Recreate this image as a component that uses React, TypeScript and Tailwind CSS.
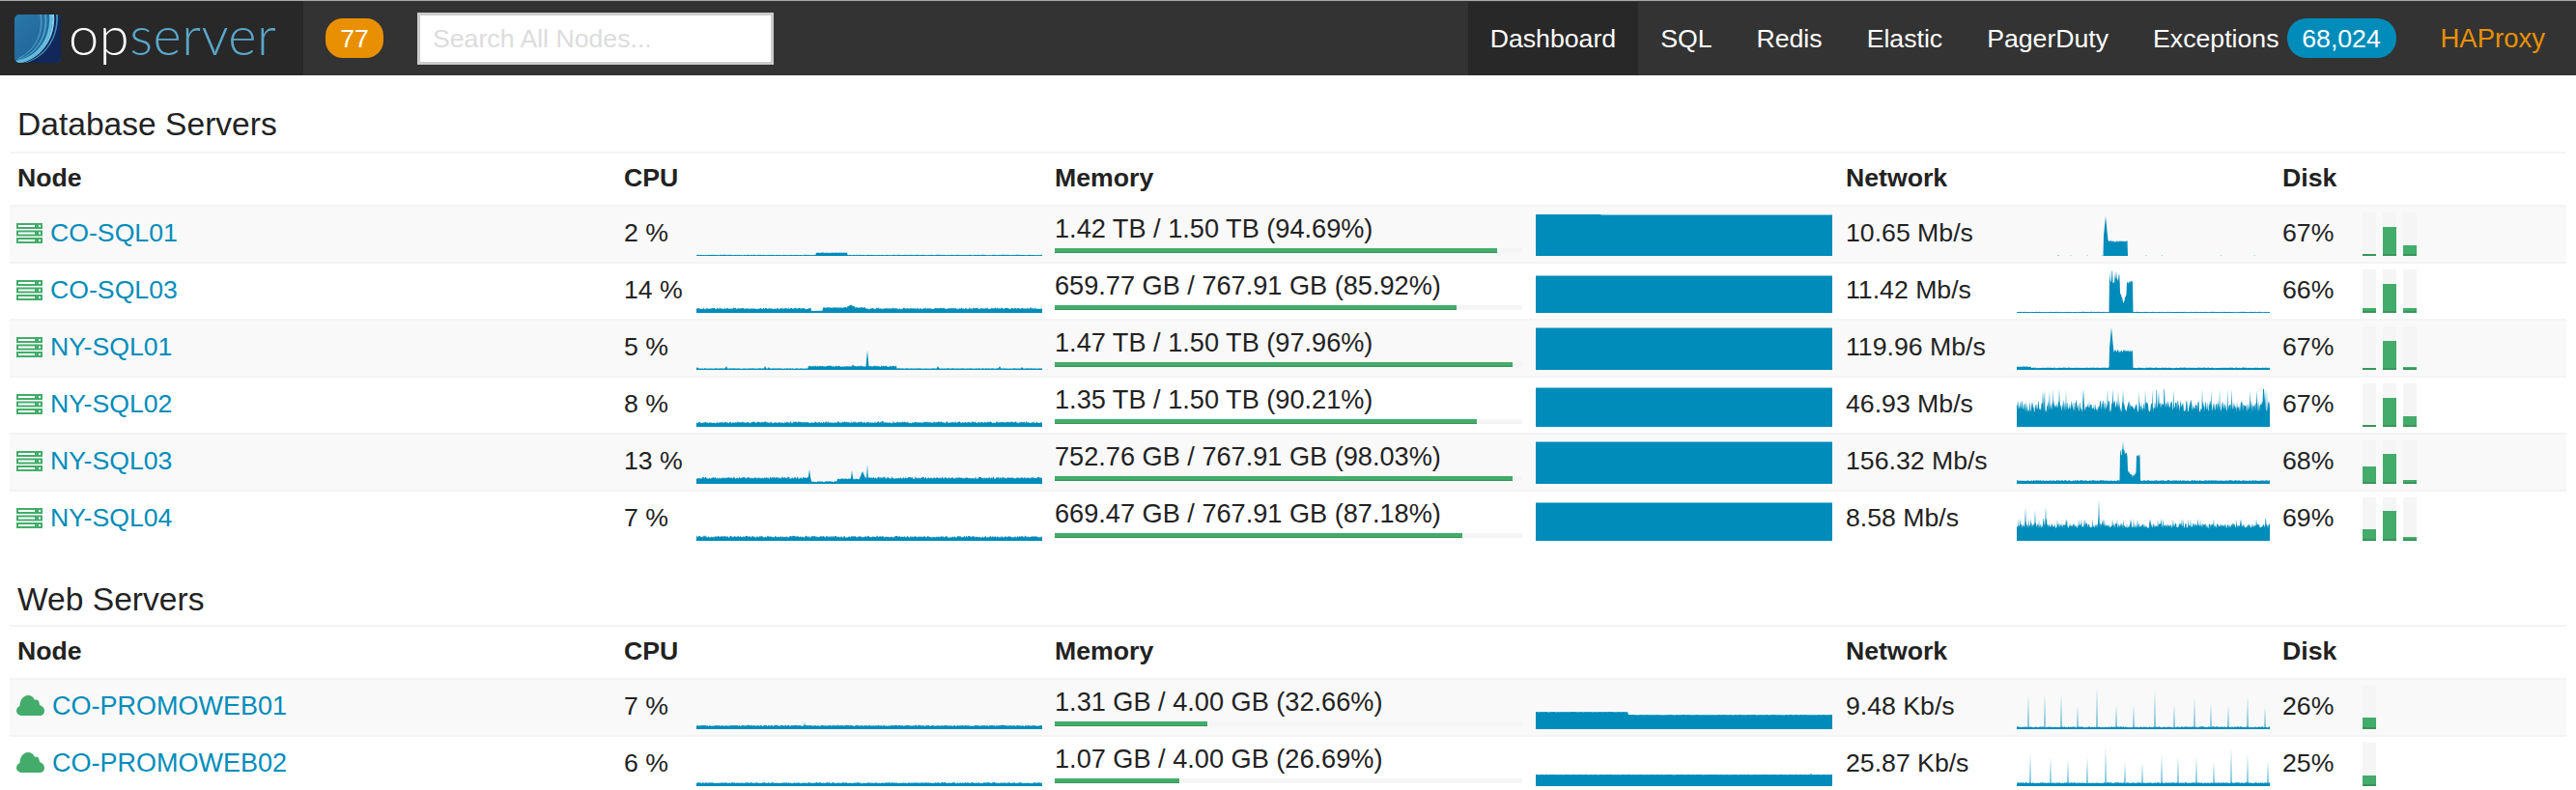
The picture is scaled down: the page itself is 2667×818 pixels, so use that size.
import React from "react";

function rng(seed: number) {
  let a = seed;
  return () => {
    a |= 0;
    a = (a + 0x6d2b79f5) | 0;
    let t = Math.imul(a ^ (a >>> 15), 1 | a);
    t = (t + Math.imul(t ^ (t >>> 7), 61 | t)) ^ t;
    return ((t ^ (t >>> 14)) >>> 0) / 4294967296;
  };
}

type Fn = (x: number, r: number) => number;

function Spark({ w, h, fn, seed }: { w: number; h: number; fn: Fn; seed: number }) {
  const r = rng(seed);
  let d = `M0 ${h}`;
  for (let x = 0; x <= w; x += 0.5) {
    const v = Math.max(0, Math.min(h, fn(x, r())));
    d += ` L${x} ${(h - v).toFixed(2)}`;
  }
  d += ` L${w} ${h} Z`;
  return (
    <svg width={w} height={h} viewBox={`0 0 ${w} ${h}`} className="block shrink-0 self-end mb-[6px]">
      <path d={d} fill="#008cba" />
    </svg>
  );
}

const spike = (x: number, at: number, height: number, width = 1.2) =>
  Math.abs(x - at) < width ? height * (1 - Math.abs(x - at) / (width * 1.4)) : 0;

const spikes = (base: number, list: [number, number][]): Fn => (x, r) => {
  let v = base + r * 1.2;
  for (const [at, he] of list) v = Math.max(v, spike(x, at, he, 0.5));
  return v;
};

const cpu: Fn[] = [
  (x, r) => (x >= 124 && x <= 156 ? 3 + r * 0.6 : 0.8 + r * 0.5),
  (x, r) => {
    if (x >= 119 && x < 131) return 2 + r * 0.4;
    if (x >= 131 && x < 175) return 5 + r * 1.2 + spike(x, 160, 2.5, 4);
    return 3.6 + r * 2;
  },
  (x, r) => {
    let v = 1.2 + r * 0.6;
    if (x >= 116 && x <= 207) v = 3 + r * 1.5;
    for (const [a, b] of [[1, 3], [31, 4], [71, 4], [75, 3], [162, 6], [250, 4], [314, 4], [337, 3]] as const)
      v = Math.max(v, spike(x, a, b, 1.4));
    return Math.max(v, spike(x, 177, 20, 1.4));
  },
  (_x, r) => 3.6 + r * 2.2,
  (x, r) => {
    let v = 5 + r * 2.4;
    if (x >= 119 && x < 146) v = 1.8 + r * 1.2;
    if (x >= 146 && x < 175) v = 4.5 + r * 1.5;
    v = Math.max(v, spike(x, 117, 15, 1.5), spike(x, 161, 14, 1.3), spike(x, 172, 13, 4), spike(x, 177, 20, 1));
    return v;
  },
  (_x, r) => 3.2 + r * 2.2,
];

const webCpu: Fn[] = [
  (x, r) => Math.max(3 + r * 1.4, spike(x, 112, 7, 1)),
  (x, r) => Math.max(2.8 + r * 1.2, spike(x, 335, 5, 1)),
];

const net: Fn[] = [
  (x, r) => {
    if (x >= 90 && x <= 114.5) return Math.max(14 + r * 2, spike(x, 92, 41, 3));
    return r > 0.985 ? 0.8 : 0;
  },
  (x, r) => {
    if (x < 96 || x > 120) return 0.8 + r * 0.4;
    if (x < 107) return 30 + r * 14;
    if (x < 114) return 9 + Math.abs(x - 110.5) * 3 + r * 3;
    return 30 + r * 4;
  },
  (x, r) => {
    if (x >= 96 && x <= 120) return Math.max(18 + r * 3, spike(x, 98, 44, 3));
    return (x < 15 ? 3 : 1.8) + r * 0.7;
  },
  (_x, r) => {
    const q = r * r;
    return 15 + r * 14 + (q > 0.86 ? q * 11 : 0);
  },
  (x, r) => {
    if (x >= 107 && x < 128) {
      if (x < 115) return Math.max(28 + r * 8, spike(x, 110, 44, 2));
      if (x < 124) return 6 + Math.abs(x - 120) * 1.2 + r * 3;
      return 26 + r * 5;
    }
    return 2.8 + r * 1.2;
  },
  (x, r) => {
    let v = 13 + r * 6;
    for (const [a, b] of [[9, 35], [19, 32], [30, 36], [85, 43]] as const) v = Math.max(v, spike(x, a, b, 0.9));
    return v + (r > 0.93 ? 4 : 0);
  },
];

const webNet: Fn[] = [
  spikes(1.6, [[12, 35], [29, 37], [46, 36], [63, 24], [83, 43], [103, 25], [121, 25], [143, 40], [163, 26], [184, 32], [201, 27], [219, 24], [239, 34], [257, 23]]),
  spikes(2.8, [[14, 34], [35, 30], [53, 27], [73, 30], [92, 41], [112, 25], [130, 24], [150, 33], [167, 31], [186, 30], [204, 25], [222, 40], [239, 33], [260, 26]]),
];

function ServerIcon() {
  return (
    <svg width="27" height="21" viewBox="0 0 27 21" className="shrink-0">
      {[0, 7.5, 15].map((y) => (
        <g key={y}>
          <rect x="0" y={y} width="27" height="6" fill="#43ac6a" />
          <rect x="2" y={y + 2} width="17" height="2" fill="#ffffff" />
          <rect x="23" y={y + 2} width="2" height="2" fill="#ffffff" />
        </g>
      ))}
    </svg>
  );
}

function CloudIcon() {
  return (
    <svg width="29" height="21" viewBox="0 0 29 21" className="shrink-0 mb-[2px]">
      <path
        d="M6 21C2 21 0 18.5 0 16C0 13.5 1.5 12 3.5 11C3.5 5 7 0 12 0C16 0 18 2.5 19 5C20.5 4 23 4.5 23.5 7.5C23.8 8.5 24 9 24 10C27 11 29 13 29 16C29 19 27 21 24 21Z"
        fill="#43ac6a"
      />
    </svg>
  );
}

function Logo() {
  return (
    <div className="flex items-center w-[314px] h-full bg-[#282828] pl-[15px] shrink-0">
      <svg width="48" height="50" viewBox="0 0 48 50" className="shrink-0">
        <defs>
          <linearGradient id="lg" x1="0" y1="0" x2="1" y2="1">
            <stop offset="0" stopColor="#2a78ab" />
            <stop offset="1" stopColor="#1c5c8f" />
          </linearGradient>
          <clipPath id="cp">
            <rect width="48" height="50" rx="5" />
          </clipPath>
        </defs>
        <g clipPath="url(#cp)">
          <rect width="48" height="50" fill="url(#lg)" />
          <path d="M2 50C26 46 40 26 39 0H48V50Z" fill="#12275a" />
          <path d="M2 48C24 44 38 24 36 0H39C41 24 28 44 6 50H2Z" fill="#62bfe0" />
          <path d="M2 47C22 42 34 22 31 0H33C36 22 24 42 2 48Z" fill="#4aa0c8" />
          <path d="M4 45C20 38 30 20 26 0H28C31 20 22 38 4 46Z" fill="#4a97c0" />
          <path d="M39 0H41C43 22 30 44 8 50H6C28 44 41 24 39 0Z" fill="#8ad3ec" />
          <path d="M43 0H45C46 22 34 44 12 50H10C31 44 45 24 43 0Z" fill="#3f93bd" />
        </g>
      </svg>
      <div className="ml-[8px] font-['Lato',sans-serif] font-light text-[56px] leading-none tracking-[0.5px] mt-[-8px]">
        <span className="text-white">op</span>
        <span className="text-[#5aa7c9]">server</span>
      </div>
    </div>
  );
}

function Nav() {
  const items = ["SQL", "Redis", "Elastic", "PagerDuty"];
  return (
    <nav className="flex items-center h-[78px] bg-[#333333] border-t border-t-[#aaaaaa] text-[26.67px] text-white">
      <Logo />
      <span className="ml-[23px] flex items-center justify-center w-[60px] h-[41px] rounded-[18px] bg-[#e99002]">77</span>
      <div className="ml-[35px] flex items-center w-[369px] h-[54px] bg-white border-[3px] border-[#cccccc] pl-[13px] text-[#dcdcdc]">
        Search All Nodes...
      </div>
      <div className="ml-auto flex items-center h-full pr-[32px]">
        <a className="flex items-center h-[76px] px-[23px] bg-[#282828] mr-[23px]">Dashboard</a>
        {items.map((t) => (
          <a key={t} className="mr-[46px]">{t}</a>
        ))}
        <a>Exceptions</a>
        <span className="ml-[8px] flex items-center justify-center w-[113px] h-[41px] rounded-[20px] bg-[#008cba]">68,024</span>
        <a className="ml-[46px] text-[#e99002] text-[27.5px]">HAProxy</a>
      </div>
    </nav>
  );
}

const rowGrid = "grid grid-cols-[628px_446px_819px_452px_301px]";

function Header() {
  return (
    <div className={`${rowGrid} h-[55px] items-center font-bold border-t-2 border-t-[#f4f4f4] pb-[4px]`}>
      <div className="pl-[8px]">Node</div>
      <div className="pl-[8px]">CPU</div>
      <div className="pl-[8px]">Memory</div>
      <div className="pl-[8px]">Network</div>
      <div className="pl-[8px]">Disk</div>
    </div>
  );
}

type R = {
  name: string;
  cpu: string;
  cpuFn: Fn;
  mem: string;
  pct: number;
  memH: number;
  memFn: Fn;
  net: string;
  netFn: Fn;
  disk: string;
  bars: number[];
  cloud?: boolean;
};

function Bar({ v }: { v: number }) {
  return (
    <div className="relative w-[14px] h-[45px] bg-[#f5f5f5] flex flex-col justify-end">
      <div className="bg-[#43ac6a] border-b-2 border-b-[#3a945b]" style={{ height: v }} />
    </div>
  );
}

function memPath(h: number, fn: Fn) {
  const r = rng(5);
  let d = `M0 ${h}`;
  for (let x = 0; x <= 307; x += 1) d += ` L${x} ${(h - Math.min(h, fn(x, r()))).toFixed(2)}`;
  return d + ` L307 ${h} Z`;
}

function Row({ r, odd, index }: { r: R; odd: boolean; index: number }) {
  return (
    <div className={`${rowGrid} h-[59px] border-t-2 border-t-[#f4f4f4] ${odd ? "bg-[#f9f9f9]" : "bg-white"}`}>
      <div className="flex items-center pl-[7px] pb-[3px]">
        {r.cloud ? <CloudIcon /> : <ServerIcon />}
        <a className={`text-[#008cba] ${r.cloud ? "ml-[8px] text-[27px]" : "ml-[8px]"}`}>{r.name}</a>
      </div>
      <div className="flex pl-[8px]">
        <div className="w-[75px] self-center pb-[3px]">{r.cpu}</div>
        <Spark w={358} h={24} fn={r.cpuFn} seed={index * 7 + 1} />
      </div>
      <div className="flex pl-[8px]">
        <div className="w-[484px] shrink-0 flex flex-col">
          <div className="h-[43px] flex items-center pt-[3px] leading-none text-[27.15px] whitespace-nowrap">{r.mem}</div>
          <div className="h-[5px] bg-[#f5f5f5]">
            <div className="h-full bg-[#43ac6a] border-b border-b-[#3a945b]" style={{ width: `${r.pct}%` }} />
          </div>
        </div>
        <div className="ml-[14px] self-end">
          <svg width="307" height={r.memH} viewBox={`0 0 307 ${r.memH}`} className="block mb-[6px]">
            <path d={memPath(r.memH, r.memFn)} fill="#008cba" />
          </svg>
        </div>
      </div>
      <div className="flex pl-[8px]">
        <div className="w-[177px] self-center pb-[3px]">{r.net}</div>
        <Spark w={262} h={46} fn={r.netFn} seed={index * 13 + 3} />
      </div>
      <div className="flex pl-[8px]">
        <div className="w-[83px] self-center pb-[3px]">{r.disk}</div>
        <div className="flex gap-[7px] self-end mb-[6px]">
          {r.bars.map((v, i) => (
            <Bar key={i} v={v} />
          ))}
        </div>
      </div>
    </div>
  );
}

const full = (h: number): Fn => () => h - 0.5;

const db: R[] = [
  { name: "CO-SQL01", cpu: "2 %", cpuFn: cpu[0], mem: "1.42 TB / 1.50 TB (94.69%)", pct: 94.69, memH: 43, memFn: (x) => (x < 68 ? 43 : 42.4), net: "10.65 Mb/s", netFn: net[0], disk: "67%", bars: [2, 30, 11] },
  { name: "CO-SQL03", cpu: "14 %", cpuFn: cpu[1], mem: "659.77 GB / 767.91 GB (85.92%)", pct: 85.92, memH: 39, memFn: full(39), net: "11.42 Mb/s", netFn: net[1], disk: "66%", bars: [5, 30, 5] },
  { name: "NY-SQL01", cpu: "5 %", cpuFn: cpu[2], mem: "1.47 TB / 1.50 TB (97.96%)", pct: 97.96, memH: 44, memFn: full(44), net: "119.96 Mb/s", netFn: net[2], disk: "67%", bars: [2, 30, 3] },
  { name: "NY-SQL02", cpu: "8 %", cpuFn: cpu[3], mem: "1.35 TB / 1.50 TB (90.21%)", pct: 90.21, memH: 41, memFn: full(41), net: "46.93 Mb/s", netFn: net[3], disk: "67%", bars: [2, 30, 11] },
  { name: "NY-SQL03", cpu: "13 %", cpuFn: cpu[4], mem: "752.76 GB / 767.91 GB (98.03%)", pct: 98.03, memH: 44, memFn: full(44), net: "156.32 Mb/s", netFn: net[4], disk: "68%", bars: [18, 31, 4] },
  { name: "NY-SQL04", cpu: "7 %", cpuFn: cpu[5], mem: "669.47 GB / 767.91 GB (87.18%)", pct: 87.18, memH: 40, memFn: full(40), net: "8.58 Mb/s", netFn: net[5], disk: "69%", bars: [12, 31, 4] },
];

const web: R[] = [
  { name: "CO-PROMOWEB01", cloud: true, cpu: "7 %", cpuFn: webCpu[0], mem: "1.31 GB / 4.00 GB (32.66%)", pct: 32.66, memH: 18, memFn: (x, r) => (x < 96 ? 17.6 + r * 0.4 : 14.6 + r * 0.4), net: "9.48 Kb/s", netFn: webNet[0], disk: "26%", bars: [12] },
  { name: "CO-PROMOWEB02", cloud: true, cpu: "6 %", cpuFn: webCpu[1], mem: "1.07 GB / 4.00 GB (26.69%)", pct: 26.69, memH: 13, memFn: (x, r) => 11.8 + r * 0.3 + (Math.abs(x - 285) < 1 ? 1 : 0), net: "25.87 Kb/s", netFn: webNet[1], disk: "25%", bars: [11] },
];

function Section({ title, rows, first }: { title: string; rows: R[]; first: boolean }) {
  return (
    <section>
      <h3 className={`flex items-end text-[33.6px] leading-none pl-[8px] ${first ? "h-[79px] pb-[11px]" : "h-[81px] pb-[9px]"}`}>{title}</h3>
      <Header />
      {rows.map((r, i) => (
        <Row key={r.name} r={r} odd={i % 2 === 0} index={i + (first ? 0 : 10)} />
      ))}
    </section>
  );
}

export default function App() {
  return (
    <div className="h-[818px] overflow-hidden bg-white text-[#222222] font-['Liberation_Sans',Arial,sans-serif] text-[26.67px]">
      <Nav />
      <main className="px-[10px]">
        <Section title="Database Servers" rows={db} first />
        <Section title="Web Servers" rows={web} first={false} />
      </main>
    </div>
  );
}
